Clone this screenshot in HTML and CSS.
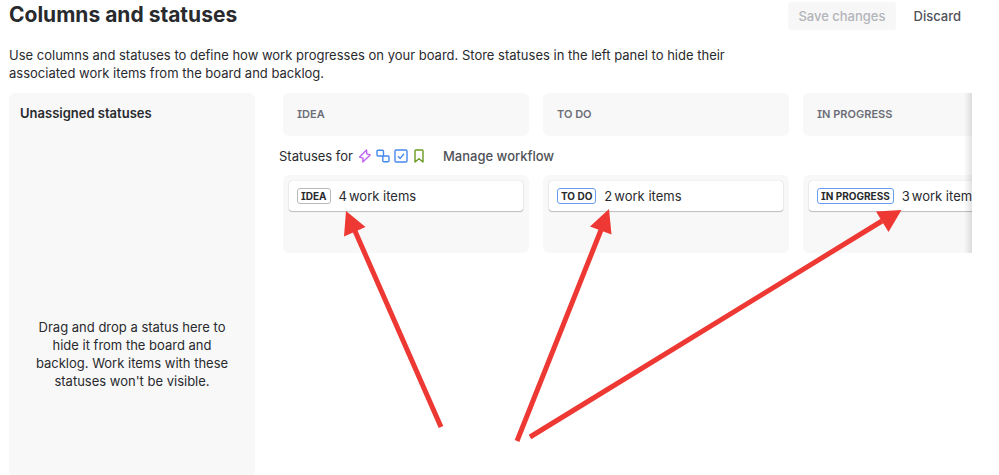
FILE: index.html
```html
<!DOCTYPE html>
<html lang="en">
<head>
<meta charset="utf-8">
<title>Columns and statuses</title>
<link rel="stylesheet" href="styles.css">
</head>
<body>
<main class="page">
  <header class="header">
    <h1 class="title">Columns and statuses</h1>
    <div class="actions">
      <button class="button" type="button" disabled>Save changes</button>
      <button class="button" type="button">Discard</button>
    </div>
  </header>
  <p class="intro">Use columns and statuses to define how work progresses on your board. Store statuses in the left panel to hide their associated work items from the board and backlog.</p>

  <div class="layout">
    <aside class="unassigned">
      <h2 class="unassigned-title">Unassigned statuses</h2>
      <p class="drop-hint">Drag and drop a status here to hide it from the board and backlog. Work items with these statuses won't be visible.</p>
    </aside>

    <section class="board">
      <div class="columns">
        <h3 class="column-name">IDEA</h3>
        <h3 class="column-name">TO DO</h3>
        <h3 class="column-name">IN PROGRESS</h3>
      </div>
      <div class="workflow">
        <span>Statuses for</span>
        <span class="types">
          <svg class="icon epic" viewBox="0 0 14 14"><path d="M8.6 1 1.6 8.1 5.1 9.2 4.8 13 12.2 5.9 8.7 4.8Z"/></svg>
          <svg class="icon subtask" viewBox="0 0 14 14"><rect x="1" y="1.200" width="6.500" height="5.800" rx="1"/><path d="M7.500 7H12q1 0 1 1v3.800q0 1-1 1H7.800q-1 0-1-1V7"/></svg>
          <svg class="icon task" viewBox="0 0 14 14"><rect x="1" y="1" width="12" height="12" rx="1.200"/><path d="m4 7.200 2.200 2.200L10 4.800"/></svg>
          <svg class="icon story" viewBox="0 0 14 14"><path d="M3 2q0-1 1-1h6q1 0 1 1v11L7 9.700 3 13Z"/></svg>
        </span>
        <button class="manage" type="button">Manage workflow</button>
      </div>
      <div class="columns">
        <div class="column">
          <article class="card"><span class="lozenge">IDEA</span><span class="count"><span>4</span><span>work items</span></span></article>
        </div>
        <div class="column">
          <article class="card"><span class="lozenge active">TO DO</span><span class="count"><span>2</span><span>work items</span></span></article>
        </div>
        <div class="column">
          <article class="card"><span class="lozenge active">IN PROGRESS</span><span class="count"><span>3</span><span>work items</span></span></article>
        </div>
      </div>
    </section>
  </div>
</main>
<svg class="arrows" width="999" height="475" viewBox="0 0 999 475" aria-hidden="true">
  <path class="shaft" d="M441 427 355 231M517 441 601 230M530 437 882 221"/>
  <path class="head" d="m346 211 19.500 16-21.500 9.500ZM609 209l2.500 25.500L590 226.500ZM901.500 210 888.500 232 876 211.500Z"/>
</svg>
</body>
</html>
```
FILE: styles.css
```css
* { box-sizing: border-box; }

body {
  margin: 0;
  background: #fff;
  color: #292a2e;
  font: 13px/18px Inter, "Liberation Sans", sans-serif;
  font-feature-settings: "cv08";
}

h1, h2, h3, p { margin: 0; }

button {
  font: inherit;
  font-feature-settings: inherit;
  border: 0;
  background: none;
  cursor: pointer;
}

.page {
  display: flex;
  flex-direction: column;
  min-height: 100vh;
  padding: 0 27px 0 9px;
}

.header {
  display: flex;
  justify-content: space-between;
  align-items: flex-start;
  height: 46px;
}

.title {
  font-size: 21px;
  line-height: 30px;
  font-weight: 700;
}

.actions { display: flex; gap: 8px; padding: 2px 1px 0 0; }

.button {
  height: 28px;
  padding: 0 10px;
  border-radius: 3px;
  color: #505258;
  font-weight: 500;
}

.button:disabled { background: #f7f7f7; color: #b3b5ba; cursor: default; }

.intro { max-width: 720px; margin-bottom: 11px; }

.layout { display: flex; flex: 1; gap: 24px; }

.unassigned {
  display: flex;
  flex-direction: column;
  flex: 0 0 246px;
  padding: 11px;
  border-radius: 6px 6px 0 0;
  background: #f8f8f8;
}

.unassigned-title { font-size: 13px; line-height: 18px; font-weight: 600; }

.drop-hint { margin-top: 196px; padding: 0 12px; text-align: center; }

.board {
  position: relative;
  flex: 1;
  min-width: 0;
  align-self: flex-start;
  overflow: hidden;
}

.board::after {
  content: "";
  position: absolute;
  top: 0;
  right: 0;
  bottom: 0;
  width: 8px;
  background: linear-gradient(to right, rgba(30, 31, 33, 0), rgba(30, 31, 33, 0.13));
}

.columns {
  display: grid;
  grid-template-columns: repeat(3, 246px);
  gap: 14px;
  padding-left: 4px;
}

.column-name {
  padding: 12px 14px 13px;
  border-radius: 6px;
  background: #f8f8f8;
  color: #6b6e76;
  font-size: 11px;
  line-height: 18px;
  font-weight: 600;
}

.workflow { display: flex; align-items: center; height: 39px; }

.types { display: flex; gap: 4px; margin-left: 5px; }

.icon {
  width: 14px;
  height: 14px;
  fill: none;
  stroke-width: 1.4;
  stroke-linejoin: round;
}

.epic { stroke: #bf63f3; }
.subtask, .task { stroke: #4688ec; }
.story { stroke: #6a9a23; }

.manage { margin-left: 17px; padding: 0; color: #505258; font-weight: 500; }

.column {
  height: 78px;
  padding: 6px;
  border-radius: 6px;
  background: #f8f8f8;
}

.card {
  display: flex;
  align-items: center;
  gap: 8px;
  height: 30px;
  padding: 0 8px;
  border-radius: 3px;
  background: #fff;
  box-shadow: 0 1px 1px rgba(30, 31, 33, 0.25), 0 0 1px rgba(30, 31, 33, 0.31);
}

.lozenge {
  padding: 0 3px;
  border: 1px solid #b7b9be;
  border-radius: 3px;
  font-size: 10px;
  line-height: 14px;
  font-weight: 700;
}

.lozenge.active { border-color: #669df1; }

.count { display: flex; gap: 2px; white-space: nowrap; }

.arrows {
  position: absolute;
  top: 0;
  left: 0;
  pointer-events: none;
}

.shaft { fill: none; stroke: #ee3833; stroke-width: 5; }
.head { fill: #ee3833; }
```
